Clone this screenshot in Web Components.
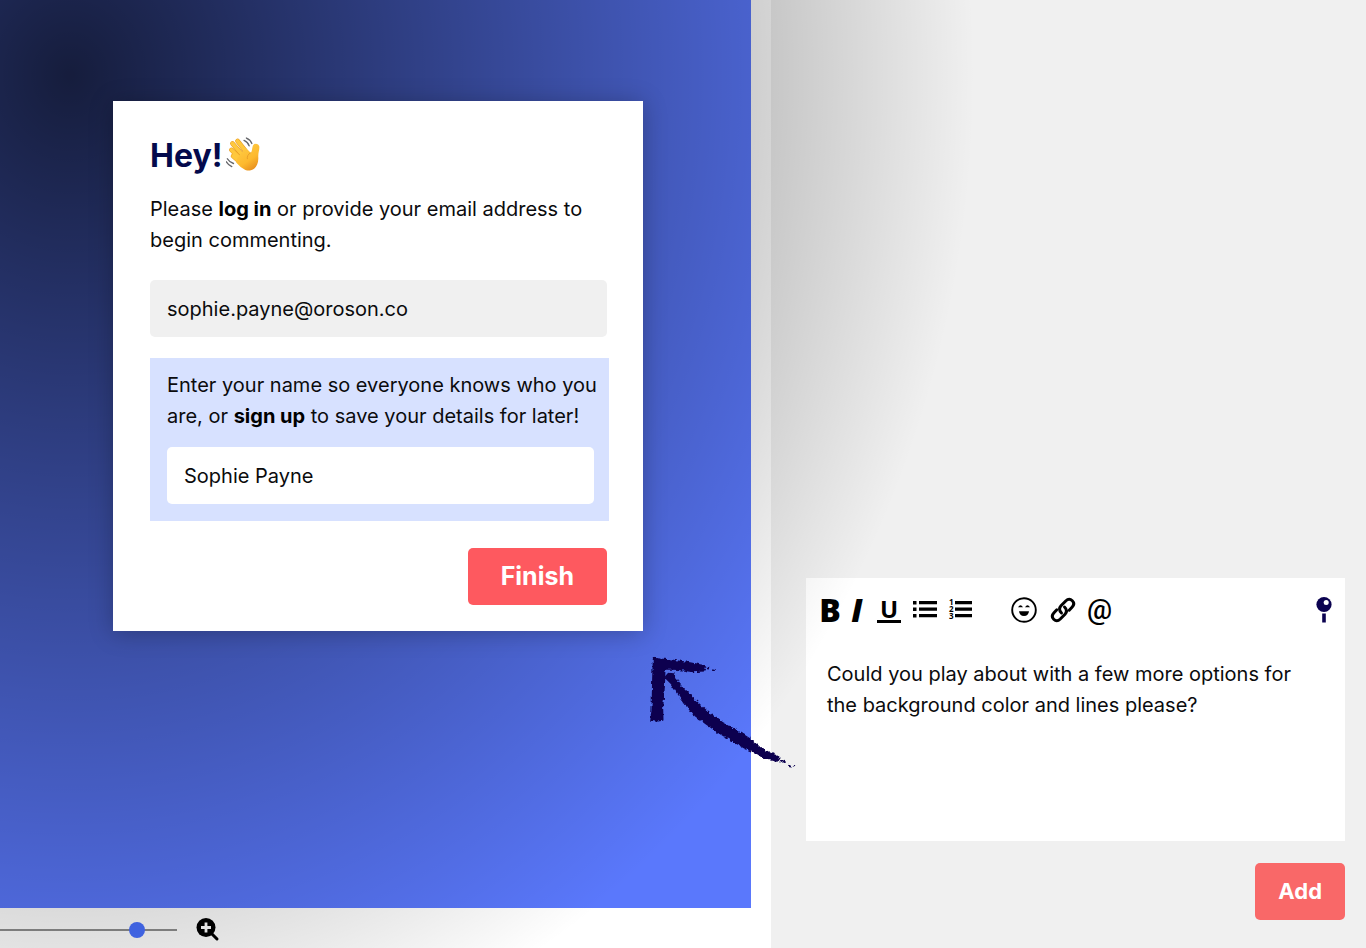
<!DOCTYPE html>
<html lang="en">
<head>
<meta charset="utf-8">
<meta name="viewport" content="width=device-width, initial-scale=1">
<title>Review board</title>
<style>
    body {
        margin: 0;
        font-family: Inter, "Liberation Sans", sans-serif;
        font-size: 20px;
        line-height: 31px;
        color: #0b0b0d;
        --navy: #0b0250;
    }
</style>
</head>
<body>

<review-board>
    <review-stage slot="stage">
        <login-card></login-card>
    </review-stage>
    <zoom-bar slot="zoom"></zoom-bar>
    <comment-editor slot="side">
        <action-button slot="action" size="small">Add</action-button>
    </comment-editor>
</review-board>

<script>
(function() {
    'use strict';

    function define(name, html) {
        var template = document.createElement('template');
        template.innerHTML = html;

        customElements.define(name, class extends HTMLElement {
            constructor() {
                super();
                this.attachShadow({ mode: 'open' });
                this.shadowRoot.appendChild(template.content.cloneNode(true));
            }
        });
    }

    // Page frame: artwork and zoom on the left, comments on the right
    define('review-board', `
        <style>
            :host {
                display: grid;
                grid-template-columns: minmax(0, 1fr) 595px;
                min-height: 100vh;
                position: relative;
                overflow: hidden;
                background: #fff;
            }
            main {
                display: flex;
                flex-direction: column;
                padding-right: 20px;
            }
            aside {
                display: flex;
                flex-direction: column;
                justify-content: flex-end;
                position: relative;
                background: #f0f0f0;
            }
            ::slotted([slot="stage"]) { flex: 1; }
            .shade {
                position: absolute;
                inset: 0;
                z-index: 1;
                pointer-events: none;
                background: radial-gradient(905px 1025px at 70px 75px, rgba(0, 0, 0, 0.76), rgba(0, 0, 0, 0));
            }
            .arrow {
                position: absolute;
                z-index: 2;
                left: -121px;
                bottom: 178px;
                width: 147px;
                height: 115px;
                fill: var(--navy);
                pointer-events: none;
            }
        </style>
        <main>
            <slot name="stage"></slot>
            <slot name="zoom"></slot>
        </main>
        <aside>
            <slot name="side"></slot>
            <svg class="arrow" viewBox="60 45 441 345" aria-hidden="true">
                <filter id="rough" x="-5%" y="-5%" width="110%" height="110%">
                    <feTurbulence type="fractalNoise" baseFrequency="0.09" numOctaves="2" seed="4"/>
                    <feDisplacementMap in="SourceGraphic" scale="14" xChannelSelector="R" yChannelSelector="G"/>
                </filter>
                <g filter="url(#rough)">
                    <g stroke="#0b0250" stroke-width="5" stroke-linejoin="round">
                        <path d="M71 56L90 58L120 60L150 65L180 69L210 75L226 78L222 92L190 94L160 89L130 87L104 86L103 120L101 160L97 200L98 240L80 243L63 240L67 210L68 160L69 110Z"/>
                        <path d="M106 112L115 101L132 102L142 125L160 148L182 170L204 190L240 222L280 250L320 272L358 296L392 325L420 340L446 351L438 363L420 358L402 355L384 341L345 324L310 304L270 280L230 252L190 222L165 190L143 158L124 130Z"/>
                    </g>
                    <path d="M231 80L241 82L238 89L229 87Z M247 85L258 88L254 93L246 91Z M452 356L468 365L465 372L450 363Z M475 371L487 378L484 383L473 376Z M491 377L496 379L494 382L490 380Z"/>
                </g>
            </svg>
        </aside>
        <div class="shade"></div>
    `);

    define('review-stage', `
        <style>
            :host {
                display: block;
                box-sizing: border-box;
                padding: 101px 108px 101px 113px;
                background: #5a78fc;
            }
        </style>
        <slot></slot>
    `);

    define('action-button', `
        <style>
            :host { display: inline-block; }
            button {
                display: block;
                height: 57px;
                padding: 0 33px;
                border: 0;
                border-radius: 5px;
                background: #fe595f;
                color: #fff;
                font: 700 25px/55px Inter, "Liberation Sans", sans-serif;
                cursor: pointer;
            }
            :host([size="small"]) button {
                padding: 0 23px;
                background: #f96868;
                font-size: 22px;
            }
            button:focus-visible { outline: 2px solid var(--navy); outline-offset: 2px; }
        </style>
        <button type="button"><slot></slot></button>
    `);

    define('text-field', `
        <style>
            :host { display: block; }
            input {
                display: block;
                box-sizing: border-box;
                width: 100%;
                height: 57px;
                padding: 1px 17px 0;
                border: 0;
                border-radius: 5px;
                background: var(--field-fill, #f0f0f0);
                color: inherit;
                font: inherit;
            }
        </style>
        <input>
    `);

    define('waving-hand', `
        <style>
            :host { display: inline-block; }
            svg { display: block; width: 34px; height: 34px; }
        </style>
        <svg viewBox="0 0 100 100" role="img" aria-label="Waving hand">
            <defs>
                <linearGradient id="skin" x1="0" y1="0" x2="0.6" y2="1">
                    <stop offset="0" stop-color="#ffd04a"/>
                    <stop offset="0.7" stop-color="#fdb92e"/>
                    <stop offset="1" stop-color="#ea9420"/>
                </linearGradient>
            </defs>
            <g fill="none" stroke-linecap="round">
                <g stroke="#e79a22" stroke-width="14">
                    <path d="M34 12L62 47M19 19L52 57M16 38L46 68M21 56L46 78"/>
                </g>
                <g stroke="#ffc83d" stroke-width="11">
                    <path d="M34 12L62 47M19 19L52 57M16 38L46 68M21 56L46 78"/>
                </g>
            </g>
            <path fill="url(#skin)" d="M33 62L58 33L73 46C77 43 76 36 79 26C82 16 97 19 98 28C99 38 94 46 95 60C96 80 87 94 73 98C57 102 43 89 30 75Z"/>
            <path fill="none" stroke="#df9426" stroke-width="2" d="M73 46C65 50 61 58 63 65"/>
            <g fill="none" stroke="#65666a" stroke-width="4" stroke-linecap="round">
                <path d="M53 10Q64 14 68 26M60 3Q72 8 76 19M4 64Q10 74 22 78M1 73Q6 82 17 87"/>
            </g>
        </svg>
    `);

    define('login-card', `
        <style>
            :host {
                display: block;
                position: relative;
                z-index: 2;
                padding: 36px 36px 26px 37px;
                background: #fff;
                box-shadow: 0 2px 22px rgba(0, 0, 0, 0.25);
            }
            form { display: flex; flex-direction: column; margin: 0; }
            h1 {
                display: flex;
                align-items: flex-start;
                gap: 4px;
                margin: 0 0 20px;
                color: #040a4c;
                font-size: 32px;
                line-height: 37px;
            }
            p { margin: 0; }
            a { color: #000; font-weight: 700; text-decoration: none; }
            .email { margin-top: 24px; }
            .name {
                margin: 21px -2px 27px 0;
                padding: 12px 15px 17px 17px;
                background: #d7e1ff;
                --field-fill: #fff;
            }
            .name p { margin-right: -10px; }
            .name text-field { margin-top: 15px; }
            action-button { align-self: flex-end; }
        </style>
        <form>
            <h1>Hey! <waving-hand></waving-hand></h1>
            <p>Please <a href="#login">log in</a> or provide your email address to begin commenting.</p>
            <text-field class="email"></text-field>
            <div class="name">
                <p>Enter your name so everyone knows who you are, or <a href="#signup">sign up</a> to save your details for later!</p>
                <text-field></text-field>
            </div>
            <action-button>Finish</action-button>
        </form>
    `);

    define('zoom-bar', `
        <style>
            :host { display: flex; align-items: center; gap: 19px; height: 40px; padding-top: 4px; box-sizing: border-box; }
            input {
                appearance: none;
                width: 177px;
                height: 18px;
                margin: 0;
                background: linear-gradient(#8e8e8e, #8e8e8e) center / 100% 2px no-repeat;
            }
            input::-webkit-slider-thumb {
                appearance: none;
                width: 16px;
                height: 16px;
                border-radius: 50%;
                background: #4870ff;
            }
            button { padding: 0; border: 0; background: none; cursor: pointer; }
            svg { display: block; width: 24px; height: 24px; }
        </style>
        <input type="range" min="0" max="100" value="80" aria-label="Zoom">
        <button type="button" aria-label="Zoom in">
            <svg viewBox="0 0 24 24">
                <path d="M16 16L21 21" stroke="#000" stroke-width="3" stroke-linecap="round"/>
                <circle cx="10" cy="9.500" r="9.500"/>
                <path d="M10 4.500v10M5 9.500h10" stroke="#fff" stroke-width="2.800"/>
            </svg>
        </button>
    `);

    define('tool-bar', `
        <style>
            :host { display: flex; align-items: center; height: 32px; }
            button {
                flex: none;
                padding: 0;
                border: 0;
                background: none;
                color: #000;
                font: 800 32px/32px "Open Sans", "Noto Sans", sans-serif;
                text-align: center;
                cursor: pointer;
            }
            svg { display: block; height: 28px; overflow: visible; }
            .bold { width: 22px; }
            .italic { width: 16px; margin-left: 8px; font-style: italic; }
            .underline { width: 24px; margin-left: 12px; }
            .underline span {
                display: block;
                border-bottom: 3px solid #000;
                font-size: 24px;
                font-weight: 700;
                line-height: 22px;
            }
            .list { margin-left: 12px; }
            .list svg { width: 24px; }
            .smile { margin-left: 38px; }
            .smile svg { width: 26px; }
            .link { margin-left: 13px; }
            .link svg { width: 26px; }
            .mention {
                margin-left: 11px;
                font: 500 28px/28px Roboto, "Noto Sans", sans-serif;
            }
            .pin { margin-left: auto; }
            .pin svg { width: 16px; }
        </style>
        <button class="bold" type="button" aria-label="Bold">B</button>
        <button class="italic" type="button" aria-label="Italic">I</button>
        <button class="underline" type="button" aria-label="Underline"><span>U</span></button>
        <button class="list" type="button" aria-label="Bulleted list">
            <svg viewBox="0 0 24 28"><path d="M0 5h3.500v3.500H0zM6 5h18v3.300H6zM0 11.500h3.500V15H0zM6 11.500h18v3.300H6zM0 18h3.500v3.500H0zM6 18h18v3.300H6z"/></svg>
        </button>
        <button class="list" type="button" aria-label="Numbered list">
            <svg viewBox="0 0 24 28">
                <path d="M6 5h17v3.300H6zM6 11.500h17v3.300H6zM6 18h17v3.300H6z"/>
                <g font-family="Open Sans, sans-serif" font-size="8" font-weight="700"><text x="0" y="9">1</text><text x="0" y="16">2</text><text x="0" y="23">3</text></g>
            </svg>
        </button>
        <button class="smile" type="button" aria-label="Emoji">
            <svg viewBox="0 0 26 28">
                <circle cx="13" cy="14" r="11.800" fill="none" stroke="#000" stroke-width="1.900"/>
                <path d="M8 15.300H18Q17.500 20 13 20T8 15.300Z"/>
                <path d="M7 11.300Q9.500 7 12 11.300ZM14 11.300Q16.500 7 19 11.300Z"/>
            </svg>
        </button>
        <button class="link" type="button" aria-label="Link">
            <svg viewBox="0 0 26 28" fill="none" stroke="#000" stroke-width="3" stroke-linecap="round">
                <path d="M11.500 17C8.500 14 9 12 11 9.800L15.700 5C18 2.800 20.500 3 22.300 4.800C24 6.500 24.200 9 22 11.300L19.200 14.200"/>
                <path d="M14.500 11C17.500 14 17 16 15 18.200L10.300 23C8 25.200 5.500 25 3.700 23.200C2 21.500 1.800 19 4 16.700L6.800 13.800"/>
            </svg>
        </button>
        <button class="mention" type="button" aria-label="Mention">@</button>
        <button class="pin" type="button" aria-label="Pin">
            <svg viewBox="0 0 16 28">
                <g fill="#0b0250"><circle cx="8" cy="8.500" r="7.600"/><path d="M6.200 17.500h3.600v9H6.200z"/></g>
                <circle cx="10.200" cy="6.500" r="2.500" fill="#fff"/>
            </svg>
        </button>
    `);

    define('comment-editor', `
        <style>
            :host {
                display: flex;
                flex-direction: column;
                align-items: flex-end;
                gap: 22px;
                padding: 0 21px 28px 35px;
            }
            .card {
                box-sizing: border-box;
                width: 100%;
                padding: 16px 13px 7px;
                background: #fff;
            }
            textarea {
                display: block;
                box-sizing: border-box;
                width: 100%;
                height: 175px;
                margin-top: 33px;
                padding: 0 35px 0 8px;
                border: 0;
                outline: 0;
                resize: none;
                background: transparent;
                color: inherit;
                font: inherit;
            }
        </style>
        <div class="card">
            <tool-bar></tool-bar>
            <textarea aria-label="Comment">Could you play about with a few more options for the background color and lines please?</textarea>
        </div>
        <slot name="action"></slot>
    `);

    // Fill the two fields of the login card
    var fields = document.querySelector('login-card').shadowRoot.querySelectorAll('text-field');
    [
        { type: 'email', label: 'Email address', value: 'sophie.payne@oroson.co' },
        { type: 'text', label: 'Your name', value: 'Sophie Payne' }
    ].forEach(function(data, i) {
        var input = fields[i].shadowRoot.querySelector('input');
        input.type = data.type;
        input.setAttribute('aria-label', data.label);
        input.value = data.value;
    });

})();
</script>
</body>
</html>
